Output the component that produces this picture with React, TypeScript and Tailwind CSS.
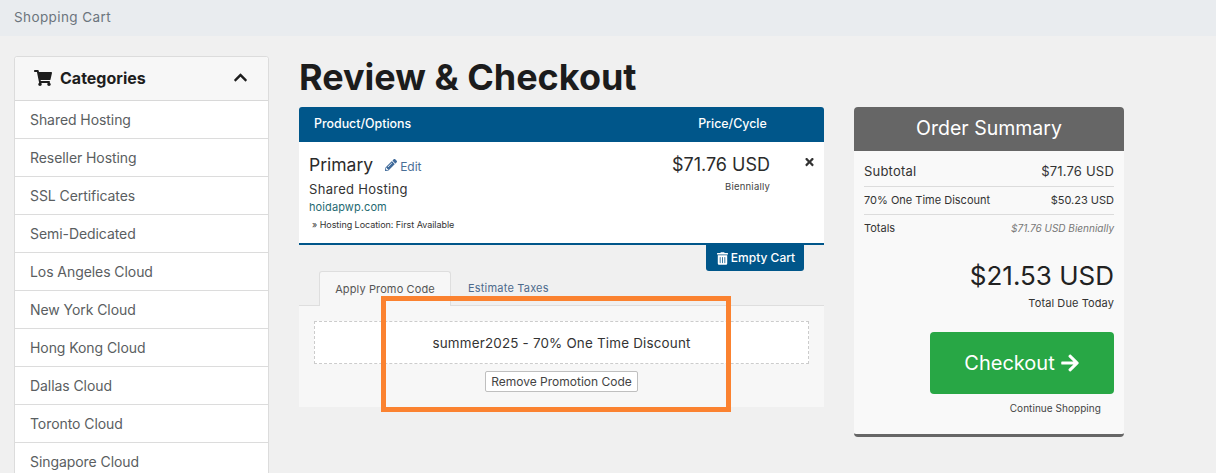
import React from 'react';
import { FaShoppingCart, FaChevronUp, FaPencilAlt, FaTimes, FaTrashAlt, FaArrowRight } from 'react-icons/fa';

const categories = [
  'Shared Hosting',
  'Reseller Hosting',
  'SSL Certificates',
  'Semi-Dedicated',
  'Los Angeles Cloud',
  'New York Cloud',
  'Hong Kong Cloud',
  'Dallas Cloud',
  'Toronto Cloud',
  'Singapore Cloud',
];

function Sidebar() {
  return (
    <aside className="w-[255px] shrink-0">
      <div className="border border-[#dcdcdc] rounded-[3px] bg-white">
        <div className="h-[44px] flex items-center justify-between pl-[19px] pr-[20px] pb-[2px] bg-[#f7f7f7] border-b border-[#d8d8d8] rounded-t-[3px]">
          <div className="flex items-center gap-[8px] text-[16px] font-bold text-[#1d1d1d]">
            <FaShoppingCart className="w-[18px] h-[16px]" />
            <span>Categories</span>
          </div>
          <FaChevronUp className="w-[15px] h-[15px] text-[#1d1d1d]" />
        </div>
        {categories.map(name => (
          <div key={name} className="h-[38px] flex items-center px-[15px] text-[14px] tracking-[-0.07px] text-[#5a5e61] border-b border-[#dcdcdc]">
            {name}
          </div>
        ))}
      </div>
    </aside>
  );
}

function CartColumn() {
  return (
    <div className="w-[525px] shrink-0">
      <h1 className="text-[36px] leading-[43px] font-bold text-[#1c1c1c] mb-[8px]">Review &amp; Checkout</h1>
      <div className="h-[35px] flex items-center bg-[#00568a] rounded-t-[3px] text-white text-[12.4px] font-medium">
        <span className="ml-[15px]">Product/Options</span>
        <span className="ml-[287px]">Price/Cycle</span>
      </div>
      <div className="h-[103px] flex bg-white border-b-2 border-[#00568a] relative">
        <div className="flex-1 pl-[10px] pt-[12px]">
          <div className="flex items-baseline">
            <span className="text-[17.5px] leading-[22px] text-[#2b2b2b]">Primary</span>
            <FaPencilAlt className="w-[12px] h-[12px] text-[#3f6a9a] ml-[12px] self-center" />
            <span className="text-[12px] text-[#4a6f96] ml-[3px]">Edit</span>
          </div>
          <div className="text-[13px] leading-[16px] text-[#333] mt-[5px] tracking-[0.3px]">Shared Hosting</div>
          <div className="text-[11px] leading-[14px] text-[#1f6a72] mt-[3px] tracking-[0.1px]">hoidapwp.com</div>
          <div className="text-[9px] leading-[12px] text-[#333] mt-[5px] ml-[3px] tracking-[-0.05px]">» Hosting Location: First Available</div>
        </div>
        <div className="w-[152px] pt-[11px] text-right pr-[54px] whitespace-nowrap">
          <div className="text-[18px] leading-[24px] text-[#2b2b2b] ml-[-60px]">$71.76 USD</div>
          <div className="text-[9.5px] leading-[12px] text-[#444] mt-[4px] tracking-[0.2px]">Biennially</div>
        </div>
        <FaTimes className="absolute right-[9px] top-[14px] w-[11px] h-[12px] text-[#333]" />
      </div>
      <div className="flex justify-end pr-[20px]">
        <button type="button" className="h-[26px] w-[98px] flex items-center justify-center gap-[3px] pl-[2px] bg-[#00568a] text-white text-[12px] font-medium rounded-b-[3px]">
          <FaTrashAlt className="w-[11px] h-[13px]" />
          <span>Empty Cart</span>
        </button>
      </div>
      <div className="flex pl-[20px] h-[35px] border-b border-[#dedede] relative">
        <div className="w-[132px] h-[35px] flex items-center justify-center pt-[1px] text-[11px] text-[#555] bg-[#f7f7f7] border border-[#dedede] border-b-0 rounded-t-[3px] tracking-[0.12px]">
          Apply Promo Code
        </div>
        <div className="ml-[17px] flex items-center pt-[1px] text-[11px] text-[#4d6a8c] tracking-[0.2px]">Estimate Taxes</div>
      </div>
      <div className="h-[101px] bg-[#f7f7f7] pt-[15px] px-[15px]">
        <div className="h-[43px] flex items-center justify-center pt-[1px] bg-white border border-dashed border-[#cccccc] text-[13.4px] text-[#333] tracking-[0.2px]">
          summer2025 - 70% One Time Discount
        </div>
        <div className="flex justify-center mt-[7px]">
          <button type="button" className="h-[21px] w-[153px] flex items-center justify-center bg-white border border-[#bfbfbf] rounded-[2px] text-[12px] text-[#444]">
            Remove Promotion Code
          </button>
        </div>
      </div>
    </div>
  );
}

function OrderSummary() {
  return (
    <div className="w-[270px] shrink-0 mt-[51px] h-[330px] bg-[#f9f9f9] rounded-[4px] border-b-[3px] border-[#666666] flex flex-col">
      <div className="h-[44px] flex items-center justify-center bg-[#666666] rounded-t-[4px] text-white text-[19.5px]">Order Summary</div>
      <div className="px-[10px] flex-1">
        <div className="h-[36px] flex items-center justify-between pt-[7px] border-b border-[#dcdcdc] text-[13px] text-[#333] tracking-[0.2px]">
          <span>Subtotal</span>
          <span>$71.76 USD</span>
        </div>
        <div className="h-[28px] flex items-center justify-between border-b border-[#dcdcdc] text-[11px] text-[#333]">
          <span>70% One Time Discount</span>
          <span>$50.23 USD</span>
        </div>
        <div className="h-[27px] flex items-center justify-between text-[11px] text-[#333]">
          <span>Totals</span>
          <span className="italic text-[10px] text-[#777]">$71.76 USD Biennially</span>
        </div>
        <div className="text-right text-[26px] leading-[30px] text-[#222] mt-[19px]">$21.53 USD</div>
        <div className="text-right text-[11px] leading-[14px] text-[#333] mt-[5px] tracking-[0.1px]">Total Due Today</div>
        <div className="flex justify-end mt-[22px]">
          <button type="button" className="w-[184px] h-[62px] flex items-center justify-center gap-[5px] bg-[#28a745] rounded-[4px] text-white text-[20px]">
            <span>Checkout</span>
            <FaArrowRight className="w-[20px] h-[20px]" />
          </button>
        </div>
        <div className="text-right text-[10px] leading-[12px] text-[#444] mt-[8px] pr-[13px] tracking-[0.05px]">Continue Shopping</div>
      </div>
    </div>
  );
}

export default function App() {
  return (
    <div className="relative h-[473px] w-full overflow-hidden bg-[#f0f0f0] font-['Inter',sans-serif]">
      <div className="h-[36px] flex items-center px-[14px] pb-[2px] bg-[#e9ecef] text-[13.5px] text-[#6c757d] tracking-[0.4px]">Shopping Cart</div>
      <div className="flex pt-[20px] pl-[14px]">
        <Sidebar />
        <div className="ml-[30px]">
          <CartColumn />
        </div>
        <div className="ml-[30px]">
          <OrderSummary />
        </div>
      </div>
      <div className="absolute left-[381px] top-[296px] w-[350px] h-[116px] border-[5px] border-[#fb8230]" />
    </div>
  );
}
